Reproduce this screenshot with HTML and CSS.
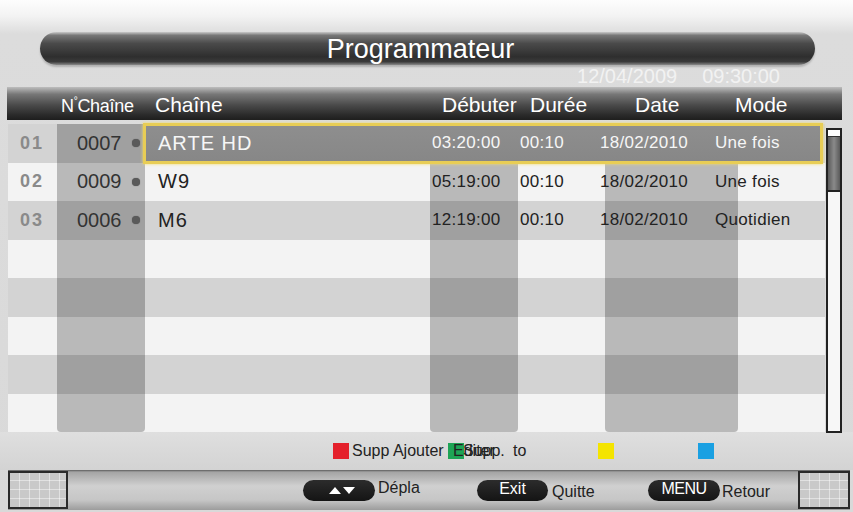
FILE: index.html
```html
<!DOCTYPE html>
<html lang="fr">
<head>
<meta charset="utf-8">
<title>Programmateur</title>
<link rel="stylesheet" href="styles.css">
</head>
<body>
<div class="screen">
  <div class="top">
    <div class="title">Programmateur</div>
    <div class="clock"><span>12/04/2009</span><span>09:30:00</span></div>
  </div>
  <div class="thead">
    <span></span>
    <span class="hsmall">N<sup>°</sup>Chaîne</span>
    <span>Chaîne</span>
    <span>Débuter</span>
    <span>Durée</span>
    <span>Date</span>
    <span>Mode</span>
  </div>
  <div class="main">
    <div class="rows">
      <div class="row g sel">
        <div class="selbox"></div>
        <span class="c num">01</span>
        <span class="c chan">0007<i class="dot"></i></span>
        <span class="c name">ARTE HD</span>
        <span class="c t">03:20:00</span>
        <span class="c t">00:10</span>
        <span class="c t">18/02/2010</span>
        <span class="c t">Une fois</span>
      </div>
      <div class="row l">
        <span class="c num">02</span>
        <span class="c chan">0009<i class="dot"></i></span>
        <span class="c name">W9</span>
        <span class="c t">05:19:00</span>
        <span class="c t">00:10</span>
        <span class="c t">18/02/2010</span>
        <span class="c t">Une fois</span>
      </div>
      <div class="row g">
        <span class="c num">03</span>
        <span class="c chan">0006<i class="dot"></i></span>
        <span class="c name">M6</span>
        <span class="c t">12:19:00</span>
        <span class="c t">00:10</span>
        <span class="c t">18/02/2010</span>
        <span class="c t">Quotidien</span>
      </div>
      <div class="row l"></div>
      <div class="row g"></div>
      <div class="row l"></div>
      <div class="row g"></div>
      <div class="row l"></div>
      <div class="bands">
        <div class="band b1"></div>
        <div class="band b2"></div>
        <div class="band b3"></div>
      </div>
    </div>
    <div class="scroll">
      <div class="cap"></div>
      <div class="thumb"></div>
    </div>
  </div>
  <div class="help">
    <i class="sq red"></i>
    <span class="h1">Supp Ajouter</span>
    <i class="sq green"></i>
    <span class="ov"><span>Editer</span><span class="ov2">Supp.</span></span>
    <span class="to">to</span>
    <i class="sq yellow"></i>
    <i class="sq blue"></i>
  </div>
  <div class="nav">
    <div class="ibox"></div>
    <div class="pill p1">
      <svg width="28" height="10" viewBox="0 0 28 10"><polygon points="1,9 7,2 13,9" fill="#fff"/><polygon points="15,2 27,2 21,9" fill="#fff"/></svg>
    </div>
    <span class="lbl l1">Dépla</span>
    <div class="pill p2">Exit</div>
    <span class="lbl l2">Quitte</span>
    <div class="pill p3">MENU</div>
    <span class="lbl l3">Retour</span>
    <div class="ibox ibox2"></div>
  </div>
</div>
</body>
</html>
```
FILE: styles.css
```css
html, body {
  margin: 0;
  padding: 0;
}
body {
  width: 853px;
  height: 512px;
  overflow: hidden;
  font-family: "Liberation Sans", Arial, sans-serif;
}
.screen {
  width: 853px;
  height: 512px;
  overflow: hidden;
  background: linear-gradient(#fdfdfd 0, #f3f3f3 16px, #dcdcdc 34px, #d9d9d9 100%);
}
.top {
  height: 87px;
  display: flex;
  flex-direction: column;
}
.title {
  margin: 32px 38px 0 40px;
  height: 33px;
  border-radius: 17px;
  background: linear-gradient(#c9c9c9 0%, #777 10%, #4a4a4a 35%, #2e2e2e 75%, #3a3a3a 90%, #8a8a8a 100%);
  box-shadow: 0 2px 2px rgba(0,0,0,0.2);
  display: flex;
  align-items: center;
  justify-content: center;
  padding-right: 14px;
  box-sizing: border-box;
  color: #fff;
  font-size: 27px;
  line-height: 30px;
}
.clock {
  height: 22px;
  display: flex;
  justify-content: flex-end;
  gap: 25px;
  padding-right: 73px;
  color: #f2f2f2;
  font-size: 20px;
  line-height: 22px;
}
.thead {
  margin: 0 11px 0 7px;
  height: 33px;
  box-sizing: border-box;
  padding-bottom: 3px;
  display: grid;
  grid-template-columns: 54px 94px 287px 88px 105px 100px 1fr;
  align-items: end;
  color: #fff;
  font-size: 21px;
  line-height: 24px;
  background: linear-gradient(#bdbdbd 0%, #777 22%, #4a4a4a 55%, #2a2a2a 85%, #1e1e1e 100%);
}
.hsmall {
  font-size: 18px;
  letter-spacing: -0.3px;
  line-height: 22px;
}
.hsmall sup {
  font-size: 10px;
  vertical-align: 8px;
  line-height: 0;
}
.main {
  display: flex;
  padding-left: 8px;
  margin-top: 4px;
  height: 308px;
}
.rows {
  position: relative;
  width: 817px;
}
.row {
  height: 38.5px;
  display: grid;
  grid-template-columns: 52px 90px 282px 88px 80px 115px 110px;
  align-items: center;
  position: relative;
  color: #222;
  font-size: 17px;
}
.row.g { background: #d3d3d3; }
.row.l { background: #f3f3f3; }
.c {
  position: relative;
  z-index: 3;
}
.num {
  padding-left: 12px;
  font-weight: bold;
  font-size: 18px;
  letter-spacing: 2px;
  color: #8a8a8a;
}
.chan {
  padding-left: 17px;
  display: flex;
  align-items: center;
  font-size: 20px;
  color: #333;
}
.dot {
  width: 8px;
  height: 8px;
  border-radius: 50%;
  background: #5a5a5a;
  margin-left: 10px;
  box-shadow: 0 0 1px #555;
}
.name {
  padding-left: 8px;
  font-size: 20px;
  letter-spacing: 1px;
}
.t {
  letter-spacing: 0.3px;
}
.row.sel .name,
.row.sel .t {
  color: #f6f6f6;
}
.selbox {
  position: absolute;
  left: 135px;
  right: 2px;
  top: -1px;
  bottom: -1px;
  z-index: 2;
  border: 3px solid #e8cd55;
  box-sizing: border-box;
  background: linear-gradient(#8e8e8e, #878787);
  box-shadow: 0 0 3px #f3dc6a;
}
.bands {
  position: absolute;
  inset: 0;
  z-index: 1;
  pointer-events: none;
}
.band {
  position: absolute;
  top: 0;
  bottom: 0;
  background: rgba(0,0,0,0.24);
  border-radius: 0 0 4px 4px;
}
.b1 { left: 49px; width: 88px; }
.b2 { left: 422px; width: 88px; }
.b3 { left: 597px; width: 133px; }
.scroll {
  margin-top: 4px;
  margin-left: 1px;
  width: 16px;
  height: 305px;
  border: 2px solid #222;
  box-sizing: border-box;
  background: #f7f7f7;
  display: flex;
  flex-direction: column;
}
.cap {
  height: 6px;
  background: #fff;
  border-bottom: 1px solid #333;
}
.thumb {
  height: 53px;
  background: linear-gradient(90deg, #5a5a5a, #8a8a8a 50%, #5a5a5a);
  border-bottom: 2px solid #222;
}
.help {
  height: 38px;
  display: flex;
  align-items: center;
  padding-left: 333px;
  background: linear-gradient(#dfdfdf, #d3d3d3);
  font-size: 16px;
  color: #222;
}
.sq {
  width: 16px;
  height: 16px;
  flex: none;
  filter: blur(0.6px);
}
.red { background: #e4202b; }
.green { background: #1ea456; }
.yellow { background: #f4e400; }
.blue { background: #1aa0e2; }
.h1 {
  width: 96px;
  margin-left: 3px;
  white-space: nowrap;
}
.ov {
  display: inline-grid;
  width: 60px;
  margin-left: -11px;
  position: relative;
}
.ov > span {
  grid-area: 1 / 1;
  white-space: nowrap;
}
.ov2 {
  padding-left: 10px;
}
.to {
  width: 85px;
}
.blue {
  margin-left: 84px;
}
.nav {
  height: 40px;
  margin: 0 3px 0 8px;
  display: flex;
  align-items: center;
  background: linear-gradient(#5c5c5c 0, #a4a4a4 2px, #d0d0d0 40%, #c6c6c6 75%, #9c9c9c 100%);
  font-size: 16px;
  color: #222;
}
.ibox {
  width: 60px;
  height: 38px;
  flex: none;
  box-sizing: border-box;
  border: 2px solid #2a2a2a;
  background:
    repeating-linear-gradient(90deg, transparent 0 9px, rgba(255,255,255,0.45) 9px 10px),
    repeating-linear-gradient(0deg, transparent 0 8px, rgba(255,255,255,0.45) 8px 9px),
    #c9c9c9;
}
.ibox2 {
  width: 52px;
}
.pill {
  height: 21px;
  border-radius: 11px;
  background: linear-gradient(#2c2c2c, #141414);
  color: #fff;
  display: flex;
  justify-content: center;
  flex: none;
  font-size: 16px;
  line-height: 17px;
}
.p1 {
  margin-left: 235px;
  width: 72px;
  align-items: center;
}
.p1 svg {
  margin-left: 6px;
}
.p2 { width: 71px; }
.p3 { width: 72px; letter-spacing: -0.5px; }
.lbl {
  flex: none;
  white-space: nowrap;
}
.l1 { width: 99px; padding-left: 3px; margin-top: -4px; }
.l2 { width: 96px; padding-left: 4px; margin-top: 4px; }
.l3 { width: 76px; padding-left: 2px; margin-top: 3px; }
```
